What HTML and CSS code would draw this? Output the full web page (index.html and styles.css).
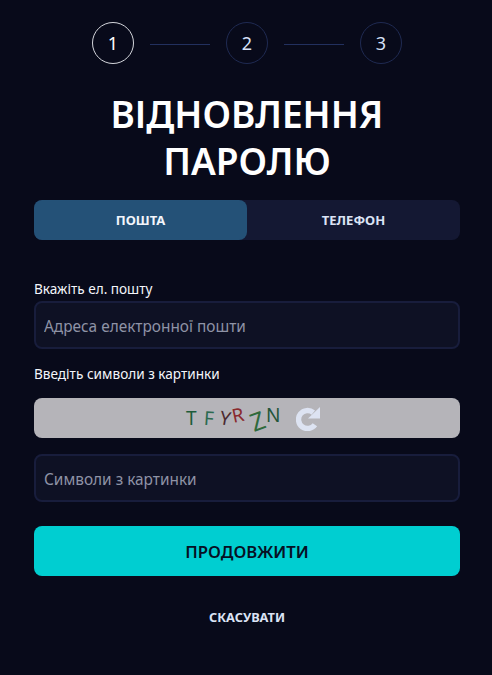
FILE: index.html
```html
<!DOCTYPE html>
<html lang="uk">
<head>
  <meta charset="UTF-8">
  <meta name="viewport" content="width=device-width, initial-scale=1.0">
  <title>Відновлення паролю</title>
  <link rel="stylesheet" href="styles.css">
</head>
<body>
  <div class="page">

    <!-- Steps -->
    <div class="steps">
      <div class="step step-active">1</div>
      <div class="step-line"></div>
      <div class="step">2</div>
      <div class="step-line"></div>
      <div class="step">3</div>
    </div>

    <h1>ВІДНОВЛЕННЯ ПАРОЛЮ</h1>

    <div class="tabs">
      <button class="tab tab-active" type="button">ПОШТА</button>
      <button class="tab" type="button">ТЕЛЕФОН</button>
    </div>

    <form onsubmit="event.preventDefault();">
      <label class="label" for="email">Вкажіть ел. пошту</label>
      <input class="field" type="text" id="email" placeholder="Адреса електронної пошти">

      <label class="label label-captcha" for="captcha">Введіть символи з картинки</label>
      <div class="captcha">
        <div class="captcha-text">
          <span class="ch ch-t">T</span>
          <span class="ch ch-f">F</span>
          <span class="ch ch-y">Y</span>
          <span class="ch ch-r">R</span>
          <span class="ch ch-z">Z</span>
          <span class="ch ch-n">N</span>
        </div>
        <svg class="refresh" width="24" height="25" viewBox="0 0 24 25">
          <path d="M18.9 18.7A9 9 0 1 1 17.3 6.6" fill="none" stroke="#dde3f2" stroke-width="5.4"/>
          <path d="M12 12.5 L24 12.5 L24 1 Z" fill="#dde3f2"/>
        </svg>
      </div>
      <input class="field field-captcha" type="text" id="captcha" placeholder="Символи з картинки">

      <button class="submit" type="submit">ПРОДОВЖИТИ</button>
      <a class="cancel" href="#">СКАСУВАТИ</a>
    </form>

  </div>
</body>
</html>
```

FILE: styles.css
```css
* { box-sizing: border-box; }
body {
  margin: 0;
  background: #080a1a;
  color: #fff;
  font-family: "Noto Sans", Arial, sans-serif;
}
.page {
  width: 492px;
  height: 675px;
  padding: 22px 32px 0 34px;
  overflow: hidden;
}
.steps {
  display: flex;
  justify-content: center;
  align-items: center;
  gap: 16px;
}
.step {
  width: 42px;
  height: 42px;
  border: 1px solid #1f2a52;
  border-radius: 50%;
  display: flex;
  align-items: center;
  justify-content: center;
  font-size: 18px;
  color: #d6e0f8;
}
.step-active { border-color: #d4d6dc; color: #fff; }
.step-line {
  width: 60px;
  height: 1px;
  background: #22305e;
  margin-top: 2px;
}
h1 {
  margin: 26px auto 0;
  width: 320px;
  font-size: 37px;
  line-height: 47px;
  font-weight: 600;
  text-align: center;
}
.tabs {
  display: flex;
  height: 40px;
  margin-top: 16px;
  background: #141833;
  border-radius: 8px;
}
.tab {
  flex: 1;
  border: none;
  background: none;
  border-radius: 8px;
  color: #dbe3f5;
  font-family: inherit;
  font-size: 13px;
  font-weight: 700;
  padding: 0;
}
.tab-active { background: #245177; color: #f2f5fb; }
.label {
  display: block;
  margin-top: 40px;
  height: 21px;
  font-size: 13.6px;
  line-height: 17px;
  color: #f4f6fb;
}
.label-captcha { margin-top: 16px; height: 33px; }
.field {
  display: block;
  width: 100%;
  height: 48px;
  padding: 2px 8px 0;
  background: #0e1124;
  border: 2px solid #181d3c;
  border-radius: 8px;
  color: #fff;
  font-family: inherit;
  font-size: 15.4px;
}
.field::placeholder { color: #8e93a6; opacity: 1; }
.field-captcha { margin-top: 16px; }
.captcha {
  height: 40px;
  background: #b5b4b9;
  border-radius: 8px;
  display: flex;
  align-items: center;
  justify-content: center;
  gap: 12px;
  padding-left: 12px;
}
.captcha-text {
  display: flex;
  align-items: center;
  width: 98px;
  height: 40px;
  font-size: 19px;
  line-height: 20px;
}
.ch { display: block; }
.ch-t { color: #1d5c3a; margin-right: 7px; }
.ch-f { color: #2c6a50; margin-right: 7px; transform: rotate(4deg); }
.ch-y { color: #4b2a30; margin-right: 1px; transform: rotate(10deg); }
.ch-r { color: #8a2a2e; margin-right: 8px; transform: translateY(-3px) rotate(-12deg); }
.ch-z { color: #2f6a3c; margin-right: 3px; transform: translateY(3px) rotate(-20deg) scale(1.3); }
.ch-n { color: #24553a; transform: translateY(-3px); }
.refresh { display: block; }
.submit {
  display: block;
  width: 100%;
  height: 50px;
  margin-top: 24px;
  border: none;
  border-radius: 8px;
  background: #00ced1;
  color: #071024;
  font-family: inherit;
  font-size: 16.7px;
  font-weight: 600;
}
.cancel {
  display: block;
  margin-top: 32px;
  text-align: center;
  font-size: 12.8px;
  font-weight: 700;
  line-height: 18px;
  color: #dbe3f5;
  text-decoration: none;
}
```
